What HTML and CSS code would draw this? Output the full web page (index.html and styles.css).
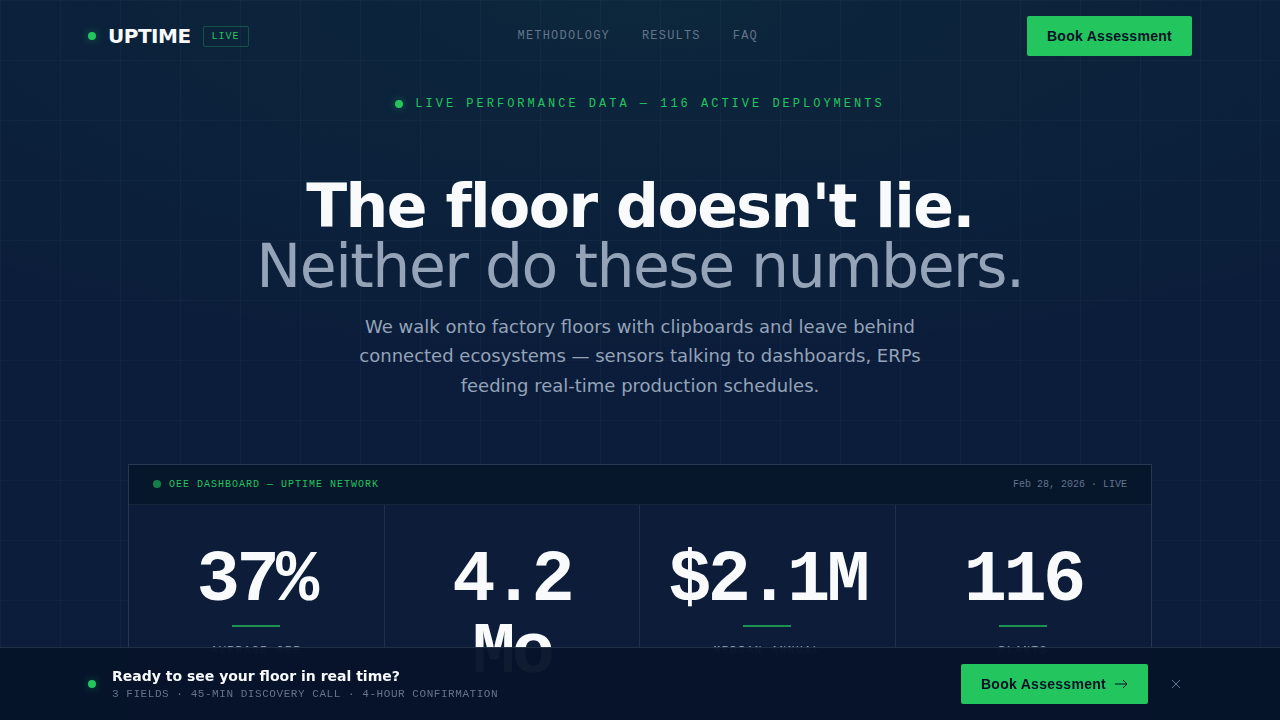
FILE: index.html
```html
<!DOCTYPE html>
<html lang="en">
<head>
<meta charset="utf-8">
<meta name="viewport" content="width=device-width, initial-scale=1">
<title>Uptime</title>
<link rel="stylesheet" href="styles.css">
</head>
<body>
<div class="page">
  <header class="nav">
    <div class="brand">
      <span class="dot"></span>
      <span class="brand-name">UPTIME</span>
      <span class="badge">LIVE</span>
    </div>
    <nav class="links">
      <a href="#methodology">METHODOLOGY</a>
      <a href="#results">RESULTS</a>
      <a href="#faq">FAQ</a>
    </nav>
    <button class="btn" type="button">Book Assessment</button>
  </header>

  <main class="hero">
    <div class="eyebrow"><span class="dot"></span><span>LIVE PERFORMANCE DATA — 116 ACTIVE DEPLOYMENTS</span></div>
    <h1 class="title"><span class="title-line">The floor doesn't lie.</span><span class="title-line title-soft">Neither do these numbers.</span></h1>
    <p class="lead">We walk onto factory floors with clipboards and leave behind connected ecosystems — sensors talking to dashboards, ERPs feeding real-time production schedules.</p>

    <section class="board" id="results">
      <div class="board-head">
        <div class="board-title"><span class="dot dot-dim"></span><span>OEE DASHBOARD — UPTIME NETWORK</span></div>
        <span class="board-date">Feb 28, 2026 · LIVE</span>
      </div>
      <div class="stats">
        <div class="stat"><div class="value">37%</div><div class="rule"></div><div class="label">AVERAGE OEE</div></div>
        <div class="stat"><div class="value">4.2 Mo</div></div>
        <div class="stat"><div class="value">$2.1M</div><div class="rule"></div><div class="label">MEDIAN ANNUAL</div></div>
        <div class="stat"><div class="value">116</div><div class="rule"></div><div class="label">PLANTS</div></div>
      </div>
    </section>
  </main>
</div>

<aside class="bar">
  <div class="bar-inner">
    <div class="bar-copy">
      <span class="dot"></span>
      <div>
        <div class="bar-title">Ready to see your floor in real time?</div>
        <div class="bar-sub">3 FIELDS · 45-MIN DISCOVERY CALL · 4-HOUR CONFIRMATION</div>
      </div>
    </div>
    <div class="bar-actions">
      <button class="btn" type="button">Book Assessment
        <svg width="14" height="14" viewBox="0 0 14 14" fill="none" stroke="currentColor" stroke-width="1" aria-hidden="true"><path d="M1 7h12M9 3l4 4-4 4"/></svg>
      </button>
      <button class="close" type="button" aria-label="Dismiss">
        <svg width="10" height="10" viewBox="0 0 10 10" fill="none" stroke="currentColor" stroke-width="1" aria-hidden="true"><path d="M1 1l8 8M9 1l-8 8"/></svg>
      </button>
    </div>
  </div>
</aside>
</body>
</html>
```

FILE: styles.css
```css
* { box-sizing: border-box; }

:root {
  --green: #22c55e;
  --mono: "Liberation Mono", monospace;
  --display: "DejaVu Sans", sans-serif;
}

body {
  margin: 0;
  background: #0b1d3a;
  color: #f8fafc;
  font-family: var(--display);
}

.page {
  height: 100vh;
  overflow: hidden;
  background:
    linear-gradient(rgba(148, 163, 184, 0.04) 1px, transparent 1px) 0 0 / 60px 60px,
    linear-gradient(90deg, rgba(148, 163, 184, 0.04) 1px, transparent 1px) 0 0 / 60px 60px,
    radial-gradient(ellipse 80% 50% at 50% 0, rgba(34, 197, 94, 0.06), transparent),
    #0b1d3a;
}

.nav {
  display: flex;
  align-items: center;
  justify-content: space-between;
  max-width: 1152px;
  height: 72px;
  margin: 0 auto;
  padding: 0 24px;
}

.brand { display: flex; align-items: center; gap: 12px; }
.brand-name { font-size: 20px; font-weight: 700; letter-spacing: -0.025em; }
.badge {
  padding: 2px 8px;
  border: 1px solid rgba(34, 197, 94, 0.3);
  border-radius: 2px;
  color: var(--green);
  font: 10px/15px var(--mono);
  letter-spacing: 0.1em;
}

.dot {
  flex: none;
  width: 8px;
  height: 8px;
  border-radius: 50%;
  background: var(--green);
  box-shadow: 0 0 8px rgba(34, 197, 94, 0.4);
}
.dot-dim { opacity: 0.6; box-shadow: none; }

.links { display: flex; gap: 32px; }
.links a {
  color: #64748b;
  font: 12px/16px var(--mono);
  letter-spacing: 0.1em;
  text-decoration: none;
}

.btn {
  display: inline-flex;
  align-items: center;
  gap: 8px;
  height: 40px;
  padding: 0 20px;
  border: 0;
  border-radius: 2px;
  background: var(--green);
  color: #051226;
  font: 700 14px/20px "Liberation Sans", sans-serif;
  letter-spacing: 0.02em;
  white-space: nowrap;
}

.hero {
  display: flex;
  flex-direction: column;
  align-items: center;
  padding: 24px 24px 0;
  text-align: center;
}
.eyebrow {
  display: flex;
  align-items: center;
  gap: 12px;
  color: var(--green);
  font: 12px/16px var(--mono);
  letter-spacing: 0.25em;
}
.title {
  margin: 64px 0 0;
  font-size: 60px;
  line-height: 60px;
  font-weight: 700;
  letter-spacing: -0.025em;
}
.title-line { display: block; }
.title-soft { color: #94a3b8; font-weight: 400; }
.lead {
  max-width: 576px;
  margin: 16px 0 0;
  color: #94a3b8;
  font-size: 18px;
  line-height: 1.625;
}

.board {
  width: 100%;
  max-width: 1024px;
  margin-top: 64px;
  border: 1px solid rgba(148, 163, 184, 0.2);
  background: #0c1c39;
}
.board-head {
  display: flex;
  align-items: center;
  justify-content: space-between;
  height: 40px;
  padding: 0 24px;
  border-bottom: 1px solid rgba(148, 163, 184, 0.1);
  background: #06162b;
  font: 10px/15px var(--mono);
}
.board-title {
  display: flex;
  align-items: center;
  gap: 8px;
  color: var(--green);
  letter-spacing: 0.1em;
}
.board-date { color: #64748b; }

.stats { display: grid; grid-template-columns: repeat(4, 1fr); }
.stat {
  display: flex;
  flex-direction: column;
  align-items: center;
  padding: 40px 24px;
  border-right: 1px solid rgba(148, 163, 184, 0.15);
}
.stat:last-child { border-right: 0; }
.value {
  font: 700 72px/72px var(--mono);
  letter-spacing: -0.05em;
}
.rule {
  width: 48px;
  height: 2px;
  margin: 8px 0 16px;
  background: var(--green);
  opacity: 0.7;
}
.label {
  color: #94a3b8;
  font: 11px/14px var(--mono);
  letter-spacing: 0.15em;
}

.bar {
  position: fixed;
  right: 0;
  bottom: 0;
  left: 0;
  border-top: 1px solid rgba(148, 163, 184, 0.2);
  background: rgba(6, 20, 41, 0.97);
}
.bar-inner {
  display: flex;
  align-items: center;
  justify-content: space-between;
  max-width: 1152px;
  margin: 0 auto;
  padding: 16px 24px;
}
.bar-copy { display: flex; align-items: center; gap: 16px; }
.bar-title { font-size: 14px; line-height: 20px; font-weight: 700; }
.bar-sub {
  color: #64748b;
  font: 11px/16px var(--mono);
  letter-spacing: 0.05em;
}
.bar-actions { display: flex; align-items: center; gap: 12px; }
.close {
  display: grid;
  place-items: center;
  width: 32px;
  height: 32px;
  padding: 0;
  border: 0;
  background: none;
  color: #64748b;
}
```
